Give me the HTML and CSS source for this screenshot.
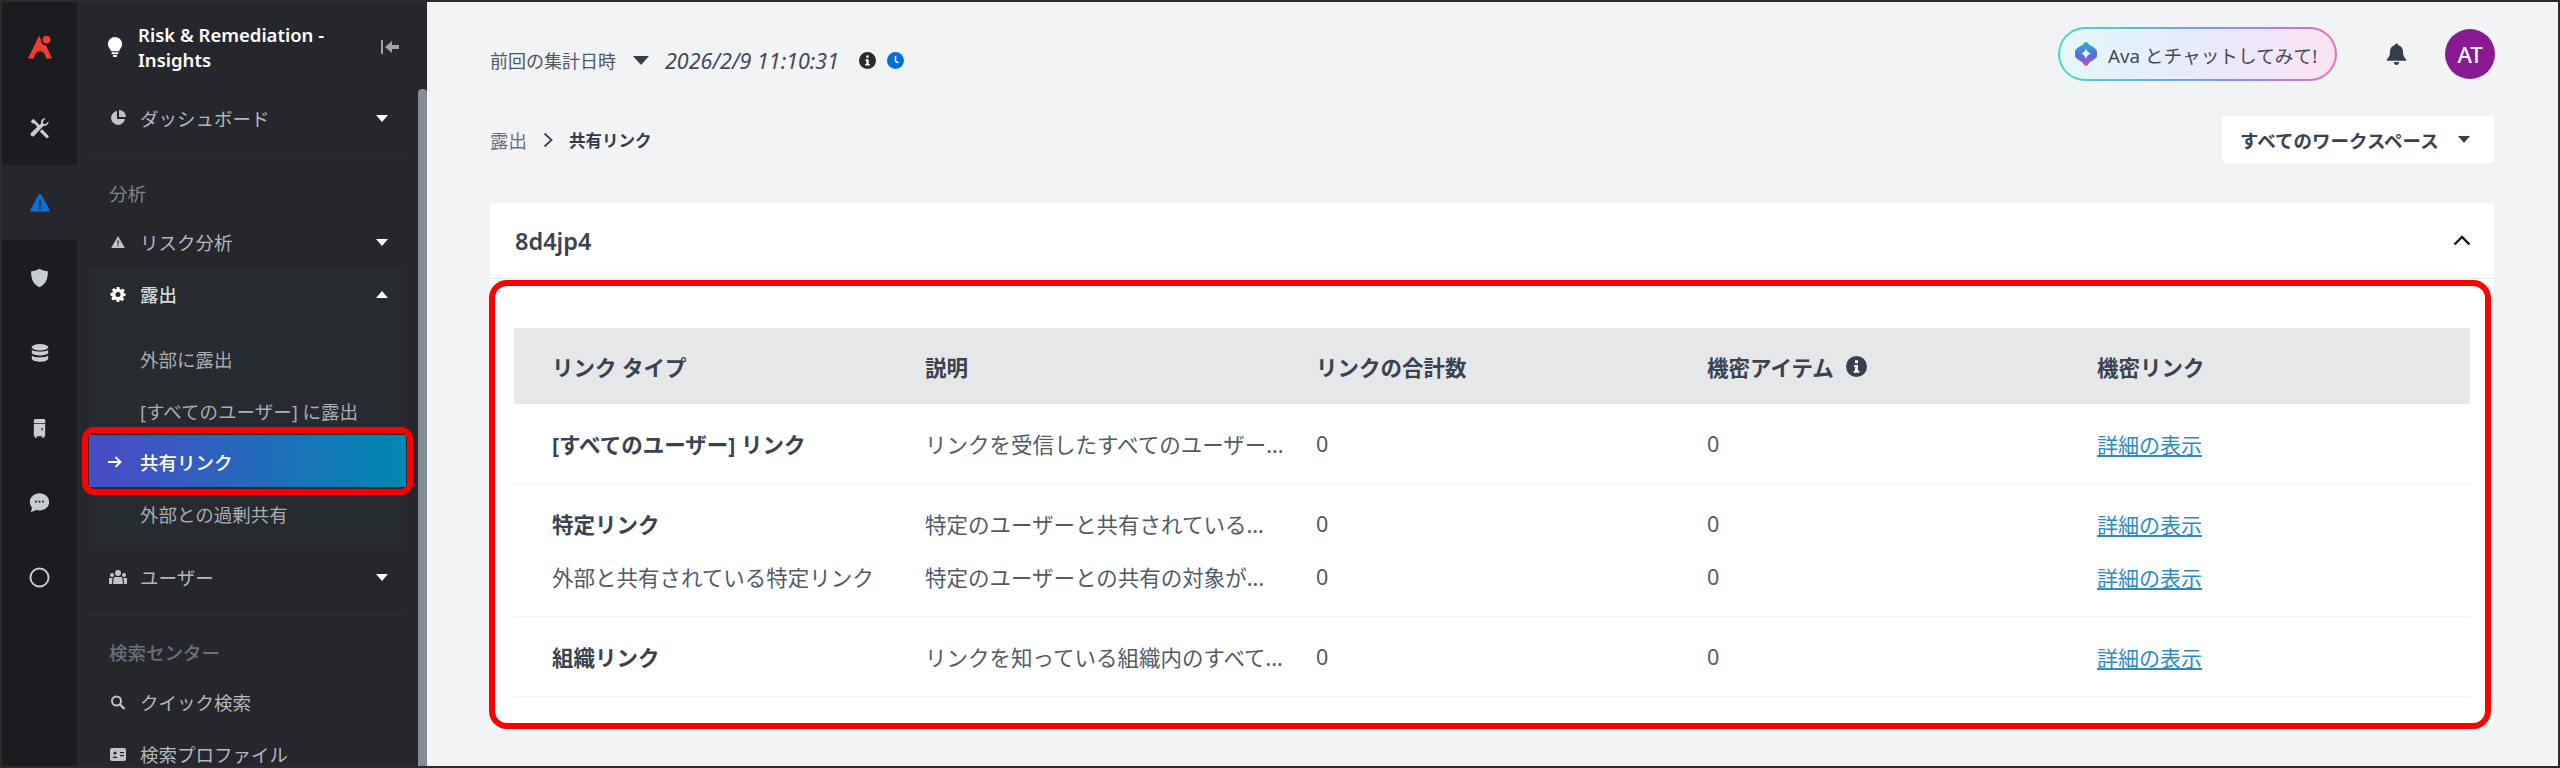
FILE: index.html
```html
<!DOCTYPE html>
<html lang="ja">

<head>
    <meta charset="UTF-8">
    <title>共有リンク</title>
    <link rel="stylesheet" href="styles.css">
</head>

<body>
    <div class="frame">
        <nav class="rail">
            <div class="rail-logo">
                <svg width="26" height="26" viewBox="0 0 28 28"><path fill="#f03e2f" d="M13 2 1 26.500h6.500c.6-5 3-8 6.500-8s5.900 3 6.500 8H27L20.500 12.500a6 6 0 0 1-5.500-6.500z"/><circle cx="21" cy="6" r="4.200" fill="#f03e2f"/></svg>
            </div>
            <div class="rail-item">
                <svg width="21" height="21" viewBox="0 0 24 24" fill="#c9ccd2"><path d="M2 5 5 2l7 7 2-2c-.8-3 1.500-6 5-5.500L15.800 5l.6 2.600L19 8.200l3.200-3.300c.5 3.500-2.500 5.900-5.500 5.100L6 21.500c-1 1-2.500 1-3.500 0s-1-2.500 0-3.500l7-7-3.500-3.500H4z"/><path d="m15 14 7 7c.8 1 .6 2-.3 2.700-.8.600-1.800.5-2.500-.2l-7-7z"/></svg>
            </div>
            <div class="rail-item rail-item-active">
                <svg width="20" height="18" viewBox="0 0 24 22"><path fill="#0a6fd8" d="M10.300 1.200c.8-1.400 2.600-1.400 3.400 0l9.800 17.300c.8 1.400-.1 3-1.700 3H2.200c-1.600 0-2.500-1.600-1.700-3z"/><path fill="#1b1c20" d="M11 7h2v7h-2zM11 16h2v2.200h-2z"/></svg>
            </div>
            <div class="rail-item">
                <svg width="19" height="20" viewBox="0 0 22 24"><path fill="#c9ccd2" d="M11 1c3 1.800 6.500 3 10 3 .3 9-2.500 16-10 19C3.500 20 .7 13 1 4c3.500 0 7-1.200 10-3z"/></svg>
            </div>
            <div class="rail-item">
                <svg width="18" height="20" viewBox="0 0 22 24" fill="#c9ccd2"><ellipse cx="11" cy="5" rx="10" ry="4"/><path d="M1 8c2 3 18 3 20 0v4c-1 4-19 4-20 0zM1 15c2 3 18 3 20 0v4c-1 5-19 5-20 0z"/></svg>
            </div>
            <div class="rail-item">
                <svg width="13" height="20" viewBox="0 0 16 24" fill="#c9ccd2"><path d="M2 1h12l1 1v4H1V2zM1 7h14v15H1z"/><path fill="#1b1c20" d="M10.500 12h1.500v3h-1.500z"/><path d="M2 22h3v2H2zM11 22h3v2h-3z"/></svg>
            </div>
            <div class="rail-item">
                <svg width="21" height="21" viewBox="0 0 24 24"><path fill="#c9ccd2" d="M12 1.500c6 0 11 4.200 11 9.800s-5 9.800-11 9.800c-1.300 0-2.500-.2-3.600-.5L2 23l1.500-5.200C1.900 16 1 13.800 1 11.300 1 5.700 6 1.500 12 1.500z"/><path fill="#1b1c20" d="M7 10h2v2H7zM11 10h2v2h-2zM15 10h2v2h-2z"/></svg>
            </div>
            <div class="rail-item">
                <svg width="21" height="21" viewBox="0 0 22 22"><circle cx="11" cy="11" r="9.500" fill="none" stroke="#c9ccd2" stroke-width="2"/></svg>
            </div>
        </nav>

        <aside class="sidebar">
            <div class="sidebar-body">
                <div class="product">
                    <svg class="product-icon" width="16" height="20" viewBox="0 0 16 21"><path fill="#fff" d="M8 0a7.500 7.500 0 0 1 7.500 7.500c0 3-2.200 4.600-3.300 7.500H4C2.800 12 .5 10.500.5 7.500A7.500 7.500 0 0 1 8 0zM4.500 16h7v2h-7zM6 19h4v2H6z"/></svg>
                    <span class="product-name">Risk &amp; Remediation - Insights</span>
                    <svg class="collapse-icon" width="18" height="14" viewBox="0 0 18 14"><path fill="#9ea3aa" d="M0 0h2v14H0zM11 1v4h7v4h-7v4L4 7z"/></svg>
                </div>

                <div class="nav-group">
                    <div class="nav-item">
                        <svg class="nav-icon" width="16" height="16" viewBox="0 0 16 16"><path fill="#c0c4ca" d="M7 1v8h8a7 7 0 1 1-8-8zM9 0a7 7 0 0 1 7 7H9z"/></svg>
                        <span class="nav-label">ダッシュボード</span>
                        <i class="caret"></i>
                    </div>
                </div>

                <div class="nav-group">
                    <div class="section-title">分析</div>
                    <div class="nav-item">
                        <svg class="nav-icon" width="16" height="12" viewBox="0 0 16 14"><path fill="#c0c4ca" d="M8 0l8 14H0z"/><path fill="#25272c" d="M7.300 5h1.400v4.500H7.300zM7.300 10.500h1.400V12H7.300z"/></svg>
                        <span class="nav-label">リスク分析</span>
                        <i class="caret"></i>
                    </div>
                    <div class="nav-open">
                        <div class="nav-item nav-item-open">
                            <svg class="nav-icon" width="16" height="15" viewBox="0 0 16 16"><path fill="#fff" fill-rule="evenodd" d="M6.500 0h3l.4 2.200 1.300.6L13.100 1.500l2.100 2.100-1.300 1.900.5 1.300L16 6.500v3l-2.200.4-.5 1.300 1.300 1.900-2.100 2.100-1.900-1.300-1.300.5L9.500 16h-3l-.4-2.300-1.300-.5-1.900 1.300L.8 12.400l1.300-1.900-.5-1.300L0 9.500v-3l2.200-.4.5-1.300L1.500 3.100 3.600 1l1.900 1.300 1.300-.5zM8 5.300a2.700 2.700 0 1 0 0 5.400 2.700 2.700 0 0 0 0-5.400z"/></svg>
                            <span class="nav-label">露出</span>
                            <i class="caret caret-up"></i>
                        </div>
                        <div class="nav-sub">外部に露出</div>
                        <div class="nav-sub">[すべてのユーザー] に露出</div>
                        <div class="nav-sub nav-sub-active">
                            <svg class="arrow-icon" width="14" height="12" viewBox="0 0 14 12"><path fill="none" stroke="#fff" stroke-width="1.800" d="M0 6h12.500M7.500 1l5 5-5 5"/></svg>
                            <span>共有リンク</span>
                            <span class="callout callout-nav"></span>
                        </div>
                        <div class="nav-sub">外部との過剰共有</div>
                    </div>
                    <div class="nav-item">
                        <svg class="nav-icon" width="18" height="14" viewBox="0 0 18 14" fill="#c0c4ca"><circle cx="9" cy="3" r="3"/><circle cx="3" cy="5" r="2"/><circle cx="15" cy="5" r="2"/><path d="M5 7h8l1 7H4zM0 8h3.500L3 14H0zM14.500 8H18v6h-3z"/></svg>
                        <span class="nav-label">ユーザー</span>
                        <i class="caret"></i>
                    </div>
                </div>

                <div class="section-title section-title-strong">検索センター</div>
                <div class="nav-item">
                    <svg class="nav-icon" width="15" height="15" viewBox="0 0 15 15"><circle cx="6" cy="6" r="4.500" fill="none" stroke="#c0c4ca" stroke-width="2"/><path stroke="#c0c4ca" stroke-width="2.400" d="m9.500 9.500 4.500 4.500"/></svg>
                    <span class="nav-label">クイック検索</span>
                </div>
                <div class="nav-item">
                    <svg class="nav-icon" width="16" height="13" viewBox="0 0 16 13"><rect width="16" height="13" rx="2" fill="#c0c4ca"/><circle cx="5" cy="5" r="1.600" fill="#25272c"/><path fill="#25272c" d="M2.500 10c.3-2 4.700-2 5 0zM10 4h4v1.200h-4zM10 7h4v1.200h-4z"/></svg>
                    <span class="nav-label">検索プロファイル</span>
                </div>
            </div>
            <div class="scrollbar"></div>
        </aside>

        <main class="main">
            <header class="topbar">
                <div class="refresh">
                    <span class="refresh-label">前回の集計日時</span>
                    <i class="caret caret-dark"></i>
                    <em class="refresh-date">2026/2/9 11:10:31</em>
                    <svg class="info-dot" width="17" height="17" viewBox="0 0 22 22"><circle cx="11" cy="11" r="11" fill="#2c2c2c"/><path fill="#fff" d="M9.500 4.500h3v3h-3zM8.500 9.500h4v6h1.500v2H8v-2h1.500v-4h-1z"/></svg>
                    <svg class="clock-dot" width="17" height="17" viewBox="0 0 17 17"><circle cx="8.500" cy="8.500" r="8.500" fill="#0a6fd0"/><path fill="none" stroke="#fff" stroke-width="1.500" d="M8.500 4v5l3 2"/></svg>
                </div>
                <div class="top-actions">
                    <div class="ava-pill">
                        <svg width="22" height="26" viewBox="0 0 24 26"><defs><linearGradient id="avaGrad" x1="0" y1="0" x2="0" y2="1"><stop offset="0" stop-color="#2fb6c9"/><stop offset=".5" stop-color="#4f72dc"/><stop offset="1" stop-color="#c04fc0"/></linearGradient></defs><path fill="url(#avaGrad)" fill-rule="evenodd" d="M12 0c1.500 0 3 1.500 4 3.500 2 .7 8 3.500 8 7v4c0 3.500-6 6-8 7.500-1 2-2.500 4-4 4s-3-2-4-4C6 20.500 0 18 0 14.500v-4C0 7 6 4.200 8 3.500 9 1.500 10.500 0 12 0zm0 7c-.8 2.800-2.700 4.700-5.500 5.500 2.800.8 4.700 2.700 5.500 6 .8-3.300 2.700-5.200 5.500-6C14.700 11.700 12.800 9.800 12 7z"/></svg>
                        <span>Ava とチャットしてみて!</span>
                    </div>
                    <svg class="bell" width="21" height="23" viewBox="0 0 24 25"><path fill="#333e4e" d="M12 0c1 0 1.800.8 1.800 1.900 4 .8 5.700 4 5.700 8 0 4.500 1.500 6 3.500 8.100.5.600.2 1.500-.7 1.500H1.700c-.9 0-1.200-.9-.7-1.500 2-2.100 3.500-3.600 3.500-8.100 0-4 1.700-7.200 5.700-8C10.200.8 11 0 12 0zM9 21h6c0 2-1.300 3.500-3 3.500S9 23 9 21z"/></svg>
                    <div class="avatar">AT</div>
                </div>
            </header>

            <div class="crumb-row">
                <div class="crumbs">
                    <span>露出</span>
                    <svg width="10" height="16" viewBox="0 0 10 16"><path fill="none" stroke="#3b4452" stroke-width="1.800" d="m1.500 1.500 7 6.500-7 6.500"/></svg>
                    <strong>共有リンク</strong>
                </div>
                <div class="workspace-select">
                    <span>すべてのワークスペース</span>
                    <i class="caret caret-dark"></i>
                </div>
            </div>

            <section class="card">
                <div class="card-head">
                    <h2>8d4jp4</h2>
                    <svg width="18" height="11" viewBox="0 0 18 11"><path fill="none" stroke="#111" stroke-width="2.400" d="m1.500 9.500 7.500-7.500 7.500 7.500"/></svg>
                </div>
                <div class="card-body">
                    <div class="table">
                        <div class="table-row table-head">
                            <div>リンク タイプ</div>
                            <div>説明</div>
                            <div>リンクの合計数</div>
                            <div class="head-info">機密アイテム
                                <svg width="21" height="21" viewBox="0 0 22 22"><circle cx="11" cy="11" r="11" fill="#36404f"/><path fill="#fff" d="M9.500 4.500h3v3h-3zM8.500 9.500h4v6h1.500v2H8v-2h1.500v-4h-1z"/></svg>
                            </div>
                            <div>機密リンク</div>
                        </div>
                        <div class="table-group">
                            <div class="table-row">
                                <div class="link-type">[すべてのユーザー] リンク</div>
                                <div class="clip">リンクを受信したすべてのユーザー...</div>
                                <div>0</div>
                                <div>0</div>
                                <div><a href="#">詳細の表示</a></div>
                            </div>
                        </div>
                        <div class="table-group">
                            <div class="table-row">
                                <div class="link-type">特定リンク</div>
                                <div class="clip">特定のユーザーと共有されている...</div>
                                <div>0</div>
                                <div>0</div>
                                <div><a href="#">詳細の表示</a></div>
                            </div>
                            <div class="table-row">
                                <div>外部と共有されている特定リンク</div>
                                <div class="clip">特定のユーザーとの共有の対象が...</div>
                                <div>0</div>
                                <div>0</div>
                                <div><a href="#">詳細の表示</a></div>
                            </div>
                        </div>
                        <div class="table-group">
                            <div class="table-row">
                                <div class="link-type">組織リンク</div>
                                <div class="clip">リンクを知っている組織内のすべて...</div>
                                <div>0</div>
                                <div>0</div>
                                <div><a href="#">詳細の表示</a></div>
                            </div>
                        </div>
                    </div>
                    <span class="callout callout-table"></span>
                </div>
            </section>
        </main>
    </div>
</body>

</html>
```

FILE: styles.css
```css
* {
    box-sizing: border-box;
}

html,
body {
    margin: 0;
    height: 100%;
    overflow: hidden;
}

body {
    font-family: "Noto Sans", "Noto Sans CJK JP", sans-serif;
    background-color: #f2f3f5;
}

.frame {
    display: flex;
    height: 768px;
    border: 2px solid #2b2b2b;
    overflow: hidden;
}

/* left icon rail */
.rail {
    width: 75px;
    flex-shrink: 0;
    background-color: #1b1c20;
}

.rail-logo {
    height: 88px;
    display: flex;
    align-items: center;
    justify-content: center;
    padding-top: 2px;
}

.rail-item {
    height: 75px;
    display: flex;
    align-items: center;
    justify-content: center;
}

.rail-item-active {
    background-color: #25272c;
}

/* sidebar */
.sidebar {
    width: 350px;
    flex-shrink: 0;
    display: flex;
    background-color: #25272c;
    overflow: hidden;
}

.sidebar-body {
    width: 341px;
    flex-shrink: 0;
    padding: 0 12px;
}

.scrollbar {
    width: 9px;
    margin-top: 87px;
    background-color: #868c94;
    border-radius: 4px 4px 0 0;
}

.product {
    height: 90px;
    display: flex;
    align-items: center;
    color: #fff;
}

.product-icon {
    margin-left: 18px;
    flex-shrink: 0;
}

.product-name {
    width: 215px;
    margin-left: 15px;
    font-size: 18.500px;
    font-weight: 600;
    line-height: 25px;
}

.collapse-icon {
    margin-left: 28px;
}

.nav-group {
    padding-bottom: 11px;
    border-bottom: 1px solid #2d2f34;
}

.nav-group + .nav-group {
    padding-bottom: 12px;
}

.nav-item {
    height: 52px;
    display: flex;
    align-items: center;
    padding: 0 18px 0 19px;
    font-size: 18.500px;
    color: #b4b8be;
}

.nav-icon {
    width: 20px;
    flex-shrink: 0;
}

.nav-label {
    flex: 1;
    margin-left: 12px;
}

.nav-item-open {
    color: #d5d7db;
    font-weight: 500;
}

.nav-open {
    height: 283px;
    background-color: #272a2f;
}

.nav-sub {
    height: 52px;
    display: flex;
    align-items: center;
    padding-left: 51px;
    font-size: 18.500px;
    color: #a8acb3;
}

.nav-item-open + .nav-sub {
    margin-top: 13px;
}

.nav-sub-active {
    position: relative;
    margin-top: -2px;
    margin-bottom: 1px;
    padding-top: 2px;
    background: linear-gradient(90deg, #4a4ac6, #0088b0);
    color: #fff;
    font-weight: 500;
}

.arrow-icon {
    position: absolute;
    left: 19px;
    top: 21px;
}

.section-title {
    height: 40px;
    margin-top: 17px;
    margin-bottom: 3px;
    padding-left: 20px;
    display: flex;
    align-items: center;
    font-size: 18.500px;
    color: #80858d;
}

.section-title-strong {
    margin-top: 16px;
    margin-bottom: 4px;
    font-weight: 500;
    color: #6c7179;
}

.caret {
    flex-shrink: 0;
    width: 0;
    height: 0;
    border-left: 6px solid transparent;
    border-right: 6px solid transparent;
    border-top: 7px solid #fff;
}

.caret-up {
    border-top: 0;
    border-bottom: 7px solid #fff;
}

.caret-dark {
    border-top-color: #333e4e;
}

/* red callouts drawn on top of the screenshot */
.callout {
    position: absolute;
    border: 6px solid #f00;
    pointer-events: none;
}

.callout-nav {
    inset: -8px -7px;
    border-radius: 12px;
}

.callout-table {
    top: 1px;
    left: -1px;
    right: 3px;
    bottom: -4px;
    border-radius: 18px;
}

/* main area */
.main {
    flex: 1;
    min-width: 0;
    padding: 25px 64px 0 63px;
}

.topbar {
    display: flex;
    justify-content: space-between;
    height: 54px;
}

.refresh {
    display: flex;
    align-items: center;
    height: 54px;
    padding-top: 12px;
    font-size: 18px;
    color: #4f5763;
}

.refresh .caret {
    margin-left: 17px;
    border-left-width: 8px;
    border-right-width: 8px;
    border-top-width: 9px;
}

.refresh-date {
    margin-left: 16px;
    color: #434b58;
    font-size: 21.500px;
}

.info-dot {
    margin-left: 20px;
}

.clock-dot {
    margin-left: 11px;
}

.top-actions {
    display: flex;
    align-items: center;
}

.ava-pill {
    width: 279px;
    height: 54px;
    display: flex;
    align-items: center;
    gap: 11px;
    padding-left: 15px;
    border: 2px solid transparent;
    border-radius: 27px;
    background:
        linear-gradient(90deg, #e4f8f7, #e5edfd 40%, #efe7fa 70%, #fae2f0) padding-box,
        linear-gradient(90deg, #4fd6c8, #6da6ef 40%, #8f8bf0 70%, #e36fc0) border-box;
    font-size: 18.700px;
    color: #434a55;
    white-space: nowrap;
}

.bell {
    margin-left: 49px;
}

.avatar {
    width: 50px;
    height: 50px;
    margin-left: 38px;
    margin-right: -1px;
    border-radius: 50%;
    display: flex;
    align-items: center;
    justify-content: center;
    background-color: #8a1a92;
    color: #fff;
    font-size: 22px;
    font-weight: 500;
}

.crumb-row {
    display: flex;
    align-items: center;
    justify-content: space-between;
    margin-top: 35px;
}

.crumbs {
    display: flex;
    align-items: center;
    gap: 16px;
    font-size: 18.500px;
    color: #6a717c;
}

.crumbs strong {
    font-size: 16.500px;
    color: #333b48;
}

.workspace-select {
    width: 272px;
    height: 47px;
    display: flex;
    align-items: center;
    gap: 19px;
    padding-left: 18px;
    background-color: #fff;
    border-radius: 4px;
    font-size: 18.500px;
    font-weight: 600;
    color: #3a4250;
}

.card {
    margin-top: 40px;
    background-color: #fff;
}

.card-head {
    height: 76px;
    display: flex;
    align-items: center;
    justify-content: space-between;
    padding: 0 23px 0 25px;
    border-bottom: 1px solid #e8e9eb;
}

.card-head h2 {
    margin: 0;
    font-size: 23.500px;
    font-weight: 600;
    color: #3a4250;
}

.card-body {
    position: relative;
    padding: 49px 24px 28px;
}

.table-row {
    display: grid;
    grid-template-columns: 373px 391px 391px 390px 1fr;
    align-items: center;
    height: 53px;
    padding-left: 38px;
    font-size: 21.500px;
    color: #525a68;
}

.table-head {
    height: 76px;
    background-color: #e6e7e9;
    font-weight: 600;
    color: #3a4250;
}

.head-info {
    display: flex;
    align-items: center;
    gap: 12px;
}

.table-group {
    padding: 13px 0;
    border-bottom: 1px solid #f1f2f3;
}

.link-type {
    font-weight: 700;
    color: #3a4250;
}

.clip {
    white-space: nowrap;
    overflow: hidden;
}

.table-row a {
    color: #2d8ac7;
    font-size: 21px;
}
```
